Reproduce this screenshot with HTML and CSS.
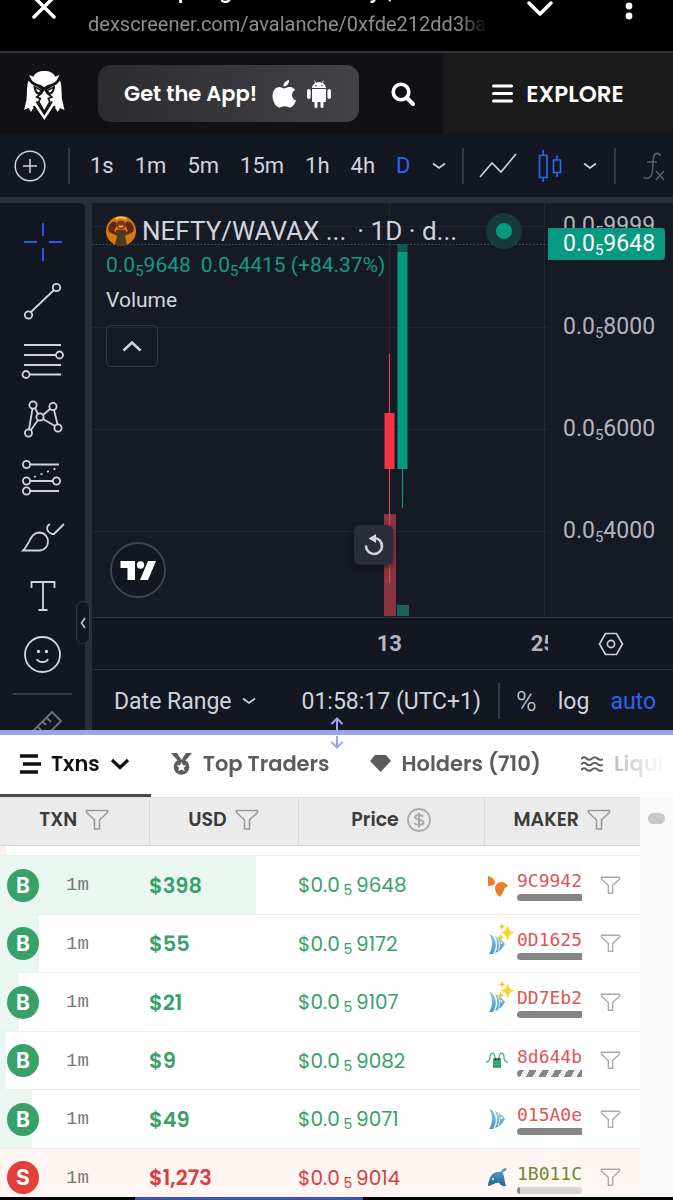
FILE: index.html
```html
<!DOCTYPE html>
<html lang="en">
<head>
<meta charset="utf-8">
<meta name="viewport" content="width=device-width, initial-scale=1">
<title>NEFTY / WAVAX</title>
<link rel="stylesheet" href="styles.css">
</head>
<body>
<svg class="defs" aria-hidden="true">
  <defs>
    <linearGradient id="sea" x1="0" y1="0" x2="0" y2="1"><stop offset="0" stop-color="#93c8e6"/><stop offset="1" stop-color="#3f9acb"/></linearGradient>
    <linearGradient id="deep" x1="0" y1="0" x2="0" y2="1"><stop offset="0" stop-color="#5aa9d0"/><stop offset="1" stop-color="#245f8c"/></linearGradient>
    <symbol id="filter" viewBox="0 0 24 22"><path d="M1.500 1.500h21v2l-8 7.500v9h-5v-9l-8-7.500z" fill="none" stroke="currentColor" stroke-width="1.600" stroke-linejoin="round"/></symbol>
    <symbol id="chev" viewBox="0 0 14 8"><path d="M1 1.500l6 4.500 6-4.500" fill="none" stroke="currentColor" stroke-width="1.600"/></symbol>
    <symbol id="fish" viewBox="0 0 24 30"><path d="M4 5c4 6 4 14 0 20h4c4-6 4-13-1-19z" fill="url(#sea)"/><path d="M10 7c5 2 8 5 10 8-3 5-5 7-10 9 3-6 3-11 0-17z" fill="url(#sea)"/><path d="M13 9c2 4 2 9 0 13" fill="none" stroke="#e4f3fb" stroke-width="1"/><circle cx="16.500" cy="14" r="1" fill="#fff"/></symbol>
    <symbol id="spark" viewBox="0 0 16 20"><path d="M10 3q1 6 6 6.500-5 1-6 7-1-6-6-7 5-.500 6-6.500z" fill="#fbd32f" stroke="#fbd32f" stroke-width="1"/><path d="M4.500 0q.500 3 3 3.500-2.500.500-3 3-.500-2.500-3-3 2.500-.500 3-3.500zM3 10q.500 4 3.500 4.500-3 .500-3.500 4-.500-3.500-3-4 2.500-.500 3-4.500z" fill="#f3c92a"/></symbol>
  </defs>
</svg>
<div class="app">
  <div class="browser">
    <button class="plain close" aria-label="Close"><svg width="24" height="24" viewBox="0 0 24 24"><path d="M2 2l20 20M22 2L2 22" stroke="#fff" stroke-width="3.500" stroke-linecap="round"/></svg></button>
    <div class="address">
      <div class="page-title">Charts spring Avalanche by |</div>
      <div class="url">dexscreener.com/avalanche/0xfde212dd3ba</div>
    </div>
    <button class="plain down" aria-label="Minimise"><svg width="26" height="18" viewBox="0 0 26 18"><path d="M2 3l11 11L24 3" fill="none" stroke="#fff" stroke-width="3.500" stroke-linecap="round" stroke-linejoin="round"/></svg></button>
    <button class="plain more" aria-label="More"><svg width="8" height="28" viewBox="0 0 8 28"><g fill="#fff"><circle cx="4" cy="4" r="3.400"/><circle cx="4" cy="14" r="3.400"/><circle cx="4" cy="24" r="3.400"/></g></svg></button>
  </div>

  <header class="site">
    <a class="logo" href="#" aria-label="Home"><svg width="42" height="51" viewBox="0 0 42 51">
      <g fill="#fff">
        <path d="M5.300 5l4 1.800C11 3 15 1 20.300 1s9.300 2 11 5.800l4-1.800c-1 4.500-4 7.500-8 9-3 .800-5.500 1.500-7 3.500-1.500-2-4-2.700-7-3.500-4-1.500-7-4.500-8-9z"/>
        <path d="M4.600 10.500c2 3 4.500 5 8 6l7.700 5 7.700-5c3.500-1 6-3 8-6C38 15 37.500 24 38 29l2.500 11-4.500-2-2.300 4-3.700-6-3 4-6.700 10-6.700-10-3-4-3.700 6L4.600 38 .100 40l2.500-11c.500-5 0-14 2-18.500z"/>
      </g>
      <path fill="#111115" d="M9.500 15.500l9.500 5-1 4.500c-5 1-8.500-3-8.500-9.500zM31.100 15.500l-9.500 5 1 4.500c5 1 8.500-3 8.500-9.500z"/>
      <path fill="#fff" d="M12 18.500l4.500 2.500-1.500 1.300c-1.500 0-2.500-1.300-3-3.800zM28.600 18.500L24.100 21l1.500 1.300c1.500 0 2.500-1.300 3-3.800z"/>
      <path fill="#fff" stroke="#111115" stroke-width="1.700" d="M20.300 18.500l3 5 4.500 3.500-3.500 1.500 1.500 3.500-5.500 10-5.500-10 1.500-3.500-3.500-1.500 4.500-3.500z"/>
      <path fill="none" stroke="#111115" stroke-width="1.800" d="M12.500 31.500L20.300 44l7.800-12.500M9.500 36l3 4M31 36l-3 4"/>
    </svg></a>
    <button class="get-app">Get the App!
      <span class="stores">
      <svg width="24" height="28" viewBox="0 0 24 28"><path fill="#fff" d="M17 0c.400 3-2 6.500-5.500 6.500C11 3.500 14 .500 17 0zM12 8.500c1.500 0 3-1.700 6-1.500 2 .100 4 1 5 3-4.500 2.500-3.500 9 1 10.500-1 3-3.300 6.700-5.700 6.900-2 .100-3-1.100-5.500-1.100s-3.500 1.100-5.300 1.100C3.500 27.400.500 20.500.500 16c0-6 3.700-9 7-9 2 0 3.500 1.500 4.500 1.500z"/></svg>
      <svg width="24" height="28" viewBox="0 0 24 28"><g fill="#fff"><path d="M5 8c.200-2.500 1.500-4 3.500-5L7 .800l.700-.400L9.300 2.700c1.800-.600 3.600-.600 5.400 0L16.300.400l.700.400L15.500 3c2 1 3.300 2.500 3.500 5zM5 9h14v11.500c0 1-.500 1.500-1.500 1.500H16.500v4.500a1.500 1.500 0 0 1-3 0V22h-3v4.500a1.500 1.500 0 0 1-3 0V22h-1C5.500 22 5 21.500 5 20.500z"/><rect x="0" y="9" width="3.600" height="10" rx="1.800"/><rect x="20.400" y="9" width="3.600" height="10" rx="1.800"/></g><circle cx="9" cy="5.500" r=".8" fill="#444"/><circle cx="15" cy="5.500" r=".8" fill="#444"/></svg>
      </span>
    </button>
    <button class="plain search" aria-label="Search"><svg width="24" height="24" viewBox="0 0 24 24"><circle cx="10" cy="10" r="7.800" fill="none" stroke="#fff" stroke-width="3.600"/><path d="M16 16l6 6" stroke="#fff" stroke-width="4" stroke-linecap="round"/></svg></button>
    <button class="explore"><svg width="21" height="19" viewBox="0 0 21 19"><path d="M1.500 2h18M1.500 9.500h18M1.500 17h18" stroke="#fff" stroke-width="3" stroke-linecap="round"/></svg>EXPLORE</button>
  </header>

  <section class="chart">
    <div class="toolbar">
      <div class="group first"><button class="plain" aria-label="Compare"><svg width="32" height="32" viewBox="0 0 32 32"><circle cx="16" cy="16" r="14.800" fill="none" stroke="#d1d4dc" stroke-width="1.500"/><path d="M16 9v14M9 16h14" stroke="#d1d4dc" stroke-width="1.500"/></svg></button></div>
      <div class="group times">
        <button class="plain">1s</button><button class="plain">1m</button><button class="plain">5m</button><button class="plain">15m</button><button class="plain">1h</button><button class="plain">4h</button><button class="plain on">D</button>
        <button class="plain" aria-label="Intervals"><svg width="14" height="8"><use href="#chev"/></svg></button>
      </div>
      <div class="group styles">
        <button class="plain" aria-label="Line"><svg width="38" height="26" viewBox="0 0 38 26"><path d="M1 24l12-14 9 9L37 1" fill="none" stroke="#d1d4dc" stroke-width="1.600"/></svg></button>
        <button class="plain" aria-label="Candles"><svg width="24" height="34" viewBox="0 0 24 34"><path d="M1.500 6.500h7.500v22H1.500zM5.200 1v5.500M5.200 28.500V33M15.500 11h7v12.500h-7zM19 6.500V11M19 23.500V28" fill="none" stroke="#2f62f0" stroke-width="1.700"/></svg></button>
        <button class="plain" aria-label="Chart styles"><svg width="14" height="8"><use href="#chev"/></svg></button>
      </div>
      <div class="group last"><button class="plain" aria-label="Indicators"><svg width="24" height="30" viewBox="0 0 24 30"><path d="M18 5c0-3-5-4-6 0-1 3-1 6-1.500 15-.500 7-6 9-9 6M5 11h10M14 20l8 9M22 20l-8 9" fill="none" stroke="#5a5e69" stroke-width="1.600"/></svg></button></div>
    </div>

    <div class="body">
      <div class="tools">
        <button class="tool" aria-label="Cross"><svg viewBox="0 0 44 44"><path d="M22 3v13M22 28v13M3 22h13M28 22h13" stroke="#2f5bea"/></svg></button>
        <button class="tool" aria-label="Trend line"><svg viewBox="0 0 44 44"><circle cx="35.500" cy="8.500" r="3.700"/><circle cx="7.500" cy="36" r="3.700"/><path d="M10 33L33 11"/></svg></button>
        <button class="tool" aria-label="Fibonacci"><svg viewBox="0 0 44 44"><path d="M3 7h37M3 17h32M3 27h37M9 36.500h31"/><circle cx="38.500" cy="17" r="3.500"/><circle cx="5" cy="36.500" r="3.500"/></svg></button>
        <button class="tool" aria-label="Patterns"><svg viewBox="0 0 44 44"><circle cx="12" cy="8" r="3.600"/><circle cx="32" cy="9.500" r="3.600"/><circle cx="19" cy="20" r="3.600"/><circle cx="7.500" cy="36" r="3.600"/><circle cx="37" cy="31" r="3.600"/><path d="M11.500 11.500L8 32.500M14 11l3 6M22 18l7-6M33 13l3.500 14.500M22 22l12 7M17 23l-7 10"/></svg></button>
        <button class="tool" aria-label="Projection"><svg viewBox="0 0 44 44"><circle cx="5.500" cy="8.500" r="3.600"/><circle cx="5.500" cy="25" r="3.600"/><circle cx="35.500" cy="25" r="3.600"/><circle cx="5.500" cy="35" r="3.600"/><path d="M9 8.500h29M9 25h23M9 35h29"/><path d="M13 21l23-9" stroke-dasharray="2 5"/></svg></button>
        <button class="tool" aria-label="Brush"><svg viewBox="0 0 44 44"><path d="M2 35.500h16c12 0 12-18 0-18C9 18 9 29 2 35.500zM29 9c-5 3-3 8 2 10h2L43 9"/></svg></button>
        <button class="tool" aria-label="Text"><svg viewBox="0 0 44 44"><path d="M10.500 14V8h23v6M22 8v28M17.500 36h9"/></svg></button>
        <button class="tool" aria-label="Emoji"><svg viewBox="0 0 44 44"><circle cx="21.500" cy="21.500" r="17.500"/><circle cx="17.500" cy="18.500" r=".8"/><circle cx="25.500" cy="18.500" r=".8"/><path d="M16 26c1 4 10 4 11 0"/></svg></button>
        <div class="tools-line"></div>
        <button class="tool faint" aria-label="Measure"><svg viewBox="0 0 44 44"><path d="M6 33L31 8l9 9-25 25zM26 14l4 4M22 18l3 3M17 23l4 4"/></svg></button>
        <button class="handle" aria-label="Hide tools"><svg width="6" height="12" viewBox="0 0 6 12"><path d="M5 1L1.500 6 5 11" fill="none" stroke="#c5c8d0" stroke-width="1.600"/></svg></button>
      </div>

      <div class="pane">
        <div class="plot">
          <svg class="candles" viewBox="0 0 456 414" preserveAspectRatio="xMaxYMin slice" aria-hidden="true">
            <path d="M0 23.500H456M0 124.500H456M0 226.500H456M0 328.500H456M297.500 0V414M452.500 0V414" stroke="#232733"/>
            <path d="M0 41.500H456" stroke="#1c6c65" stroke-dasharray="1.500 2"/>
            <path fill="#8b343f" d="M292 311h12v102h-12z"/><path fill="#1b6259" d="M305 402h12v11h-12z"/>
            <path d="M297.500 151V380" stroke="#e0424e" stroke-width="1.200"/><path fill="#f23645" d="M292.500 210h10v56h-10z"/>
            <path d="M310.500 266v39" stroke="#089981" stroke-width="1.200"/><path fill="#0a5c52" d="M305.500 41h10v8h-10z"/><path fill="#089981" d="M305.500 49h10v217h-10z"/>
          </svg>
          <div class="legend">
            <div class="symbol">
              <svg width="30" height="30" viewBox="0 0 30 30"><circle cx="15" cy="15" r="15" fill="#d9780f"/><path d="M2 12q3-8 8-6l1 3-3 6 4 2v3l-5-2-4-2zM28 12q-3-8-8-6l-1 3 3 6-4 2v3l5-2 4-2z" fill="#5d2b15"/><path d="M10 14h10l-1 6 2 9q-6 2-12 0l2-9z" fill="#4c3a1b"/><circle cx="15" cy="9" r="4.500" fill="#7d3517"/><path d="M12.500 10.500h5" stroke="#e0a060" stroke-width="2"/><path d="M10 3q5-3 10 0" stroke="#f7d08a" stroke-width="1.600" fill="none"/></svg>
              <span class="name">NEFTY/WAVAX ...</span><span class="period">· 1D · d...</span>
              <i class="status"></i>
            </div>
            <div class="values"><span>0.0<sub>5</sub>9648</span><span>0.0<sub>5</sub>4415 (+84.37%)</span></div>
            <div class="volume">Volume</div>
            <button class="collapse" aria-label="Collapse legend"><svg width="20" height="12" viewBox="0 0 20 12"><path d="M1.500 10.500L10 2.500l8.500 8" fill="none" stroke="#d1d4dc" stroke-width="2.600"/></svg></button>
          </div>
          <a class="tv" href="#" aria-label="TradingView"><svg width="56" height="56" viewBox="0 0 56 56"><circle cx="28" cy="28" r="27" fill="#131722" stroke="#434651" stroke-width="1.800"/><path fill="#fff" d="M10.500 19H25v19h-7.500V26h-7zM38 19h8l-8 19h-8z"/><circle cx="30.500" cy="23" r="3.700" fill="#fff"/></svg></a>
          <button class="reset" aria-label="Reset chart"><svg width="20" height="22" viewBox="0 0 20 22"><path d="M2 11.500a8 8 0 1 0 8-7.500" fill="none" stroke="#d1d4dc" stroke-width="2.600"/><path d="M4.500 4.500L12 0v9z" fill="#d1d4dc"/></svg></button>
        </div>
        <div class="axis">
          <span class="tick t1">0.0<sub>5</sub>9999</span>
          <span class="last-price">0.0<sub>5</sub>9648</span>
          <span class="tick t2">0.0<sub>5</sub>8000</span>
          <span class="tick t3">0.0<sub>5</sub>6000</span>
          <span class="tick t4">0.0<sub>5</sub>4000</span>
        </div>
        <div class="dates"><span class="day d13">13</span><span class="day d25">25</span></div>
        <div class="corner"><button class="plain" aria-label="Chart settings"><svg width="26" height="24" viewBox="0 0 26 24"><path d="M7.500 1.500h11L24.500 12l-6 10.500h-11L1.500 12z" fill="none" stroke="#d1d4dc" stroke-width="1.600"/><circle cx="13" cy="12" r="3.600" fill="none" stroke="#d1d4dc" stroke-width="1.600"/></svg></button></div>
        <div class="footer">
          <button class="plain range">Date Range <svg width="14" height="8"><use href="#chev"/></svg></button>
          <button class="plain clock">01:58:17 (UTC+1)</button>
          <div class="scales"><button class="plain percent">%</button><button class="plain">log</button><button class="plain on">auto</button></div>
        </div>
      </div>
    </div>
    <div class="resizer"><svg width="14" height="32" viewBox="0 0 14 32"><path d="M7 13V2M1.500 7L7 1.500 12.500 7M7 19v11M1.500 25L7 30.500 12.500 25" fill="none" stroke="#9aa5ee" stroke-width="2"/></svg></div>
  </section>

  <nav class="tabs">
    <button class="tab active"><svg width="21" height="20" viewBox="0 0 21 20"><path d="M0 2h18M3 10h18M0 18h18" stroke="currentColor" stroke-width="3.600"/></svg>Txns<svg class="arrow" width="20" height="12" viewBox="0 0 20 12"><path d="M2 2l8 7.500L18 2" fill="none" stroke="currentColor" stroke-width="3.200"/></svg></button>
    <button class="tab"><svg width="21" height="22" viewBox="0 0 21 22"><path fill="currentColor" d="M0 0h6l4 6-3 2zM21 0h-6l-4 6 3 2z"/><circle cx="10.500" cy="14" r="7.800" fill="currentColor"/><path fill="#fff" d="M10.500 9l1.500 3.200 3.500.300-2.700 2.300.900 3.500-3.200-1.900-3.200 1.900.900-3.500-2.700-2.300 3.500-.300z"/></svg>Top Traders</button>
    <button class="tab"><svg width="21" height="17" viewBox="0 0 21 17"><path fill="currentColor" d="M5 0h11l5 6-10.500 11L0 6z"/></svg>Holders (710)</button>
    <button class="tab"><svg width="22" height="16" viewBox="0 0 22 16"><path d="M0 3q3-3 5.500-.500t5.500 0 5.500 0T22 3M0 8.500q3-3 5.500-.500t5.500 0 5.500 0 5.500.500M0 14q3-3 5.500-.500t5.500 0 5.500 0 5.500.500" fill="none" stroke="currentColor" stroke-width="2"/></svg>Liquidity</button>
  </nav>

  <div class="trades">
    <table>
      <colgroup><col class="c-txn"><col class="c-usd"><col class="c-price"><col class="c-maker"></colgroup>
      <thead><tr>
        <th><span>TXN<svg width="24" height="22"><use href="#filter"/></svg></span></th>
        <th><span>USD<svg width="24" height="22"><use href="#filter"/></svg></span></th>
        <th><span>Price<svg width="24" height="24" viewBox="0 0 24 24"><g fill="none" stroke="#aaa"><circle cx="12" cy="12" r="11" stroke-width="1.800"/><path d="M16 8.500c-1-2-8-2-8 .800 0 3.200 8.500 1.800 8.500 5.200 0 3-8 3-9 .500M12 4.500v15" stroke-width="2"/></g></svg></span></th>
        <th><span>MAKER<svg width="24" height="22"><use href="#filter"/></svg></span></th>
      </tr></thead>
      <tbody>
        <tr class="peek" style="--w:6px"><td colspan="4"></td></tr>
        <tr class="buy" style="--w:256px"><td><div class="txn"><b class="side">B</b><span class="age">1m</span></div></td><td class="usd">$398</td><td class="price">$0.0<sub> 5 </sub>9648</td><td><div class="maker"><svg class="animal" viewBox="0 0 24 30"><path fill="#ee7d2a" d="M3 6c4 1 6 3 7 6l-1 3-6 1zM10 18c1-7 9-8 13-2-1 1-3 1-4 4s-2 4-4 7c-3-2-5-5-5-9z"/></svg><a href="#">9C9942<i class="bar"></i></a><svg class="f" width="21" height="19"><use href="#filter"/></svg></div></td></tr>
        <tr class="buy" style="--w:39px"><td><div class="txn"><b class="side">B</b><span class="age">1m</span></div></td><td class="usd">$55</td><td class="price">$0.0<sub> 5 </sub>9172</td><td><div class="maker"><svg class="animal"><use href="#fish"/></svg><svg class="new" width="17" height="20"><use href="#spark"/></svg><a href="#">0D1625<i class="bar"></i></a><svg class="f" width="21" height="19"><use href="#filter"/></svg></div></td></tr>
        <tr class="buy" style="--w:19px"><td><div class="txn"><b class="side">B</b><span class="age">1m</span></div></td><td class="usd">$21</td><td class="price">$0.0<sub> 5 </sub>9107</td><td><div class="maker"><svg class="animal"><use href="#fish"/></svg><svg class="new" width="17" height="20"><use href="#spark"/></svg><a href="#">DD7Eb2<i class="bar"></i></a><svg class="f" width="21" height="19"><use href="#filter"/></svg></div></td></tr>
        <tr class="buy" style="--w:6px"><td><div class="txn"><b class="side">B</b><span class="age">1m</span></div></td><td class="usd">$9</td><td class="price">$0.0<sub> 5 </sub>9082</td><td><div class="maker"><svg class="animal" viewBox="0 0 24 30"><path d="M10 13C10 5 5 6 5 11c0 4-2 5-4 5M14 13c0-8 5-7 5-2 0 4 2 5 4 5" fill="none" stroke="#4db380" stroke-width="1.400"/><path fill="#49ad78" d="M8 12h8v10H8z"/><path d="M8 17h8M8 20h8" stroke="#2f8a5a"/><circle cx="10.500" cy="13.500" r="1" fill="#123"/><circle cx="13.500" cy="13.500" r="1" fill="#123"/></svg><a href="#">8d644b<i class="bar striped"></i></a><svg class="f" width="21" height="19"><use href="#filter"/></svg></div></td></tr>
        <tr class="buy" style="--w:32px"><td><div class="txn"><b class="side">B</b><span class="age">1m</span></div></td><td class="usd">$49</td><td class="price">$0.0<sub> 5 </sub>9071</td><td><div class="maker"><svg class="animal"><use href="#fish"/></svg><a href="#">015A0e<i class="bar"></i></a><svg class="f" width="21" height="19"><use href="#filter"/></svg></div></td></tr>
        <tr class="sell" style="--w:100%"><td><div class="txn"><b class="side">S</b><span class="age">1m</span></div></td><td class="usd">$1,273</td><td class="price">$0.0<sub> 5 </sub>9014</td><td><div class="maker"><svg class="animal" viewBox="0 0 24 30"><path fill="url(#deep)" d="M3 23c1-9 4-15 12-14l3-3c2-2 4 0 4 0-1 2-3 3-5 3 3 4 2 9 4 14-4 1-6-2-7-3-4-1-7 3-11 3z"/><circle cx="8" cy="16" r="1" fill="#fff"/></svg><a class="holder" href="#">1B011C<i class="bar small"></i></a><svg class="f" width="21" height="19"><use href="#filter"/></svg></div></td></tr>
      </tbody>
    </table>
    <div class="rail"><i></i></div>
  </div>
  <div class="bottom-strip"><i></i></div>
</div>
</body>
</html>
```
FILE: styles.css
```css
* { box-sizing: border-box; }
body { margin: 0; background: #fff; font-family: Poppins, Inter, sans-serif; overflow: hidden; }
button { font: inherit; color: inherit; border: 0; padding: 0; margin: 0; background: none; cursor: pointer; }
a { text-decoration: none; color: inherit; }
svg { display: block; flex: none; }
.defs { position: absolute; width: 0; height: 0; }
.app { display: flex; flex-direction: column; height: 100vh; }

/* browser bar */
.browser { display: flex; flex: none; height: 53px; padding: 0 40px 0 32px; background: #000; border-bottom: 2px solid #333336; overflow: hidden; font-family: Roboto, sans-serif; }
.browser .plain { align-self: flex-start; }
.close { margin-top: -5px; }
.address { width: 404px; margin-left: 32px; overflow: hidden; white-space: nowrap; mask-image: linear-gradient(90deg, #000 92%, transparent 99%); }
.page-title { margin-top: -24px; height: 28px; line-height: 28px; font-size: 24px; font-weight: 500; color: #fff; }
.url { margin-top: 8px; font-size: 20px; line-height: 24px; color: #8e8e8e; }
.down { margin-left: 35px; }
.browser .more { margin-left: auto; margin-top: -8px; }

/* site header */
.site { display: flex; flex: none; align-items: center; height: 81px; background: #111115; color: #fff; font-weight: 600; }
.logo { margin-left: 24px; margin-top: 4px; }
.get-app { display: flex; align-items: center; justify-content: space-between; width: 261px; height: 57px; margin-left: 32px; padding: 0 28px 0 26px; border-radius: 13px; background: linear-gradient(90deg, #2b2b30, #434347); font-size: 21px; }
.stores { display: flex; gap: 11px; }
.search { margin-left: 32px; }
.explore { display: flex; flex: 1; align-items: center; justify-content: center; gap: 13px; height: 100%; margin-left: 28px; background: #1a1a1a; font-size: 23px; }

/* chart frame */
.chart { position: relative; flex: none; background: #2a2e39; color: #d1d4dc; font-family: Roboto, sans-serif; font-size: 22px; border-bottom: 5px solid #9aa3ea; }
.on { color: #2f62f0; }
.toolbar { display: flex; align-items: center; height: 63px; background: #131722; overflow: hidden; }
.group { display: flex; flex: none; align-items: center; height: 36px; border-right: 2px solid #363a45; }
.first { padding: 0 22px 0 14px; }
.times { gap: 21px; padding: 0 16px 0 20px; }
.styles { gap: 21px; padding: 0 17px 0 15px; }
.last { padding-left: 26px; border-right: 0; }
.body { display: grid; grid-template-columns: 85px 1fr; gap: 7px; height: 533px; padding-top: 6px; }
.tools { position: relative; min-height: 0; padding-top: 9px; background: #131722; border-top-right-radius: 5px; clip-path: inset(0 -6px 0 0); }
.tool { display: flex; align-items: center; width: 85px; height: 59px; padding-left: 21px; }
.tool svg { width: 44px; height: 44px; fill: none; stroke: #d1d4dc; stroke-width: 1.800; }
.tool.faint svg { stroke: #70747e; }
.tool.faint { height: 62px; }
.tools-line { height: 2px; margin: 9px 13px 0; background: #363a45; }
.handle { position: absolute; top: 398px; right: -5px; display: flex; align-items: center; justify-content: center; width: 14px; height: 43px; background: #131722; border: 1px solid #363a45; border-radius: 7px; }

.pane { display: grid; grid-template-columns: 1fr 125px; grid-template-rows: 415px 51px 1fr; min-width: 0; background: #131722; border-top-left-radius: 5px; }
.plot { position: relative; min-width: 0; border-bottom: 1px solid #2f333e; background: #161a25; overflow: hidden; }
.candles { width: 100%; height: 414px; }
.legend { position: absolute; left: 14px; top: 10px; right: 26px; display: flex; flex-direction: column; }
.symbol { display: flex; align-items: center; height: 35px; font-size: 26px; white-space: nowrap; }
.name { margin-left: 6px; }
.period { margin-left: 11px; }
.status { width: 36px; height: 36px; margin-left: auto; border: 10px solid #17393d; border-radius: 50%; background: #089981; }
.values { display: flex; gap: 10px; height: 35px; font-size: 21px; line-height: 35px; color: #159a86; white-space: nowrap; }
sub { font-size: 15px; line-height: 0; vertical-align: -4px; }
.volume { height: 34px; font-size: 21px; line-height: 34px; }
.collapse { display: flex; align-items: center; justify-content: center; width: 52px; height: 42px; margin-top: 8px; border: 1px solid #363a45; border-radius: 5px; }
.tv { position: absolute; left: 18px; bottom: 19px; }
.reset { position: absolute; right: 155px; bottom: 52px; display: flex; align-items: center; justify-content: center; width: 39px; height: 40px; border-radius: 6px; background: #2a2e39; box-shadow: 0 2px 5px #0008; }
.axis { position: relative; border-bottom: 1px solid #2f333e; color: #b2b5be; font-size: 23px; line-height: 32px; background: #161a25; }
.tick { position: absolute; left: 15px; }
.t1 { top: 7px; }
.t2 { top: 108px; }
.t3 { top: 210px; }
.t4 { top: 312px; }
.last-price { position: absolute; left: 0; top: 25px; right: 8px; padding-left: 15px; border-radius: 0 3px 3px 0; background: #089981; color: #fff; }
.dates { position: relative; overflow: hidden; font-weight: 700; color: #b2b5be; line-height: 52px; }
.day { position: absolute; }
.d13 { right: 146px; }
.d25 { right: -8px; }
.corner { display: flex; align-items: center; padding-left: 50px; }
.footer { display: flex; grid-column: 1 / 3; align-items: center; padding: 2px 17px 0 22px; border-top: 1px solid #2f333e; font-size: 23px; }
.range { display: flex; align-items: center; gap: 10px; }
.clock { margin-left: auto; }
.scales { display: flex; align-items: center; gap: 21px; height: 36px; margin-left: 17px; padding-left: 16px; border-left: 2px solid #363a45; }
.percent { font-size: 28px; font-weight: 300; }
.resizer { position: absolute; left: 50%; bottom: -19px; z-index: 2; width: 14px; margin-left: -7px; }

/* tabs */
.tabs { display: flex; flex: none; height: 62px; background: #fff; overflow: hidden; mask-image: linear-gradient(90deg, #000 89%, #0006 91%, transparent 99%); }
.tab { display: flex; flex: none; align-items: center; gap: 11px; padding: 0 20px 5px; font-size: 21px; font-weight: 600; color: #5c5c5c; }
.tab.active { padding-right: 21px; padding-bottom: 2px; gap: 10px; color: #111; border-bottom: 3px solid #484848; }

/* trades */
.trades { display: flex; flex: 1; min-height: 0; overflow: hidden; }
table { flex: 1; min-width: 0; height: 0; border-collapse: collapse; table-layout: fixed; }
.c-txn, .c-usd { width: 149px; }
.c-price { width: 186px; }
th { height: 48px; padding: 0; background: #ebebeb; border-top: 1px solid #e0e0e0; border-bottom: 1px solid #d8d8d8; border-right: 1px solid #dadada; font-size: 19px; font-weight: 600; color: #3b3b3b; }
th:last-child { border-right: 0; }
th span { display: flex; align-items: center; justify-content: center; gap: 8px; padding-bottom: 4px; }
th svg { color: #9a9a9a; }
td { padding: 0; }
tbody tr { height: 59px; border-bottom: 1px solid #eeeeee; background: linear-gradient(var(--tint), var(--tint)) no-repeat 0 0 / var(--w) 100%; }
tbody tr:nth-child(odd) { height: 58px; }
tbody tr.peek { height: 10px; --tint: #fdeeed; }
.buy { --tint: #eaf6f0; color: #38a169; }
.sell { --tint: #fff5f3; color: #dd3c3c; }
.txn { display: flex; align-items: center; gap: 27px; padding-left: 7px; }
.side { display: flex; align-items: center; justify-content: center; width: 32px; height: 33px; border-radius: 50%; background: #38a169; color: #fff; font-family: Inter, sans-serif; font-size: 21px; }
.sell .side { background: #e53e3e; }
.age { color: #777; font-family: "Liberation Mono", monospace; font-size: 19px; }
.usd { font-size: 21px; font-weight: 600; }
.price { font-size: 20px; white-space: nowrap; }
.price sub { font-size: 14px; vertical-align: -3px; white-space: pre; }
.maker { position: relative; display: flex; align-items: center; }
.animal { width: 24px; height: 30px; margin-left: 1px; }
.new { position: absolute; left: 13px; top: -5px; }
.maker a { width: 65px; margin-left: 8px; color: #e05555; font-family: "DejaVu Sans Mono", monospace; font-size: 18px; line-height: 24px; }
.maker a.holder { color: #6b8a34; }
.bar { display: block; height: 7px; margin-top: 1px; border-radius: 4px 0 0 4px; background: #868686; }
.bar.striped { background: repeating-linear-gradient(120deg, #868686 0 6px, #f1f1f1 6px 11px); }
.bar.small { border-radius: 4px; background: linear-gradient(90deg, #868686 3px, #d5d5d5 3px); }
.f { margin-left: 18px; color: #aaa; }
.rail { flex: none; width: 33px; padding: 16px 8px; background: #f9f9f9; }
.rail i { display: block; width: 17px; height: 11px; border-radius: 6px; background: #c8c8c8; }
.bottom-strip { flex: none; height: 3px; background: #000; }
.bottom-strip i { display: block; width: 34%; height: 3px; margin-left: 20%; background: #3f51b5; }
```
